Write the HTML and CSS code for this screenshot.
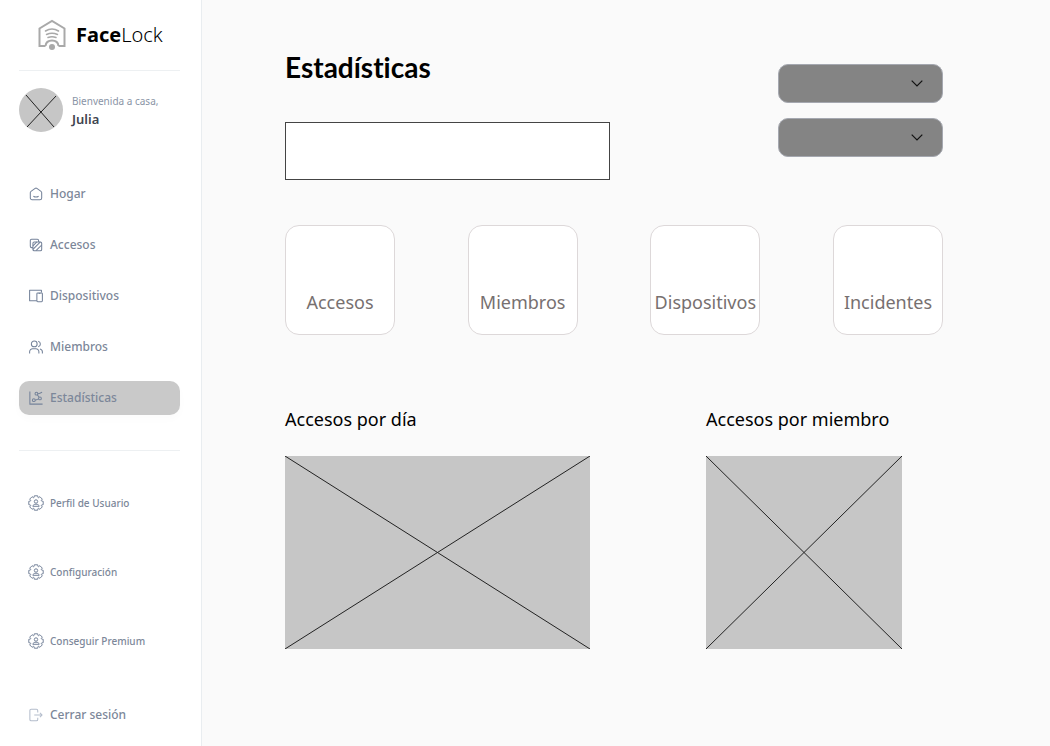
FILE: index.html
```html
<!DOCTYPE html>
<html lang="es">
<head>
<meta charset="utf-8">
<meta name="viewport" content="width=device-width, initial-scale=1">
<title>FaceLock</title>
<link rel="stylesheet" href="styles.css">
</head>
<body>
<svg class="sprite" aria-hidden="true">
  <symbol id="gear" viewBox="0 0 16 16">
    <path d="M15.200 6.300V9.700L13.500 10L13.300 10.500L14.300 11.900L11.900 14.300L10.500 13.300L10 13.500L9.700 15.200H6.300L6 13.500L5.500 13.300L4.100 14.300L1.700 11.900L2.700 10.500L2.500 10L.8 9.700V6.300L2.500 6L2.700 5.500L1.700 4.100L4.100 1.700L5.500 2.700L6 2.500L6.300.8H9.700L10 2.500L10.500 2.700L11.900 1.700L14.300 4.100L13.300 5.500L13.500 6z"/>
    <circle cx="8" cy="6.500" r="1.700"/>
    <path d="M4.800 11.300c.3-1.600 1.500-2.100 3.200-2.100s2.900.5 3.200 2.100z"/>
  </symbol>
</svg>
<div class="app">
  <aside class="sidebar">
    <a class="brand" href="#">
      <svg class="brand-logo" viewBox="0 0 28 32" aria-hidden="true">
        <path d="M7.500 27H1.500V9.500L14 2l12.500 7.500V27h-6M7.500 27c.4-3.500 3-5.500 6.500-5.500s6.100 2 6.500 5.500"/>
        <path d="M7.500 12c4-2.500 9-2.500 13 0M8.500 15.500c3.300-1.500 7.700-1.500 11 0M10 18.500c2.500-.8 5.500-.8 8 0" stroke-width="1.500" stroke-linecap="round"/>
        <circle class="brand-dot" cx="14" cy="28" r="3"/>
      </svg>
      <span class="brand-name"><b>Face</b>Lock</span>
    </a>
    <div class="user">
      <svg class="avatar" viewBox="0 0 44 44" aria-hidden="true">
        <circle cx="22" cy="22" r="22"/>
        <path d="M7 7l28 32M37 8L8 39"/>
      </svg>
      <div class="user-text">
        <span class="greeting">Bienvenida a casa,</span>
        <strong class="user-name">Julia</strong>
      </div>
    </div>
    <nav class="nav">
      <a class="item" href="#"><svg class="icon" viewBox="0 0 16 16" aria-hidden="true"><path d="M1.500 6.500Q1.500 5.500 2.300 5L7 1.600q1-.7 2 0L13.700 5q.8.500.8 1.500v6a2 2 0 0 1-2 2h-9a2 2 0 0 1-2-2zM5 10.500c1.700 1 4.300 1 6 0"/></svg>Hogar</a>
      <a class="item" href="#"><svg class="icon" viewBox="0 0 16 16" aria-hidden="true"><path d="M4.500 11H3a1.500 1.500 0 0 1-1.500-1.500V3A1.500 1.500 0 0 1 3 1.500h6.500A1.500 1.500 0 0 1 11 3v1.500"/><rect x="4.500" y="4.500" width="10" height="10" rx="1.500"/><path d="M4.500 9L9 4.500M4.500 13L13 4.500M8 14.500L14.500 8"/></svg>Accesos</a>
      <a class="item" href="#"><svg class="icon" viewBox="0 0 16 16" aria-hidden="true"><path d="M9 13.500H.7v-12h13.500V4"/><rect x="9" y="4.500" width="6.300" height="10" rx="1"/><path d="M11 5h2"/></svg>Dispositivos</a>
      <a class="item" href="#"><svg class="icon" viewBox="0 0 16 16" aria-hidden="true"><circle cx="6" cy="4.500" r="3.300"/><path d="M.7 15.500v-2A3.500 3.500 0 0 1 4.200 10h3.600a3.500 3.500 0 0 1 3.500 3.500v2M10.500 1.300a3.300 3.300 0 0 1 0 6.400M12.500 10.200a3.500 3.500 0 0 1 2.800 3.300v2"/></svg>Miembros</a>
      <a class="item active" href="#" aria-current="page"><svg class="icon" viewBox="0 0 16 16" aria-hidden="true"><path d="M1 .5V15h14.500"/><circle cx="5.500" cy="10.500" r="1.600"/><circle cx="12.500" cy="8.500" r="1.600"/><circle cx="8.500" cy="3" r="1.600"/><path d="M7 10.500l4-1.500M9.500 4.200l2 3M10 3c2 .3 3-.9 5-1.500"/></svg>Estadísticas</a>
    </nav>
    <nav class="nav nav-secondary">
      <a class="item" href="#"><svg class="icon" aria-hidden="true"><use href="#gear"/></svg>Perfil de Usuario</a>
      <a class="item" href="#"><svg class="icon" aria-hidden="true"><use href="#gear"/></svg>Configuración</a>
      <a class="item" href="#"><svg class="icon" aria-hidden="true"><use href="#gear"/></svg>Conseguir Premium</a>
    </nav>
    <button class="item logout" type="button"><svg class="icon icon-light" viewBox="0 0 16 16" aria-hidden="true"><path d="M10 5V3a1.500 1.500 0 0 0-1.500-1.500H2.500A1.500 1.500 0 0 0 1 3v10a1.500 1.500 0 0 0 1.500 1.500h6A1.500 1.500 0 0 0 10 13v-2M6 8h9M12.500 5.500L15 8l-2.500 2.500"/></svg>Cerrar sesión</button>
  </aside>
  <main class="main">
    <header class="header">
      <div class="intro">
        <h1 class="title">Estadísticas</h1>
        <input class="field" type="text" aria-label="Buscar">
      </div>
      <div class="filters">
        <div class="filter">
          <select class="select" aria-label="Periodo"><option></option></select>
          <svg class="chevron" viewBox="0 0 12 7" aria-hidden="true"><path d="M.7.700L6 6 11.300.7"/></svg>
        </div>
        <div class="filter">
          <select class="select" aria-label="Miembro"><option></option></select>
          <svg class="chevron" viewBox="0 0 12 7" aria-hidden="true"><path d="M.7.700L6 6 11.300.7"/></svg>
        </div>
      </div>
    </header>
    <section class="cards">
      <button class="card" type="button">Accesos</button>
      <button class="card" type="button">Miembros</button>
      <button class="card" type="button">Dispositivos</button>
      <button class="card" type="button">Incidentes</button>
    </section>
    <section class="charts">
      <div>
        <h2 class="chart-title">Accesos por día</h2>
        <svg class="chart" viewBox="0 0 100 100" preserveAspectRatio="none" aria-hidden="true"><path d="M0 0l100 100M100 0L0 100"/></svg>
      </div>
      <div>
        <h2 class="chart-title">Accesos por miembro</h2>
        <svg class="chart" viewBox="0 0 100 100" preserveAspectRatio="none" aria-hidden="true"><path d="M0 0l100 100M100 0L0 100"/></svg>
      </div>
    </section>
  </main>
</div>
</body>
</html>
```
FILE: styles.css
```css
* {
  box-sizing: border-box;
}

body {
  margin: 0;
  background: #fafafa;
  color: #000;
  font-family: "Noto Sans", "Open Sans", sans-serif;
}

.sprite {
  position: absolute;
  width: 0;
  height: 0;
}

.app {
  display: flex;
  min-height: 100vh;
}

/* Sidebar */
.sidebar {
  display: flex;
  flex: none;
  flex-direction: column;
  width: 202px;
  padding: 0 21px 14px 19px;
  border-right: 1px solid #e9edf0;
  background: #fff;
}

.brand {
  display: flex;
  align-items: center;
  gap: 10px;
  height: 71px;
  padding-left: 19px;
  border-bottom: 1px solid #edf0f2;
  color: #000;
  font-size: 20px;
  font-weight: 300;
  line-height: 28px;
  text-decoration: none;
}

.brand-name b {
  font-weight: 700;
}

.brand-logo {
  width: 28px;
  height: 32px;
  fill: none;
  stroke: #a9a9a9;
  stroke-width: 2;
}

.brand-logo .brand-dot {
  fill: #a9a9a9;
  stroke: none;
}

.user {
  display: flex;
  align-items: center;
  gap: 9px;
  margin: 17px 0 45px;
}

.avatar {
  flex: none;
  width: 44px;
  height: 44px;
  fill: #c6c6c6;
  stroke-width: 1;
}

.avatar path {
  stroke: #222;
}

.user-text {
  display: flex;
  flex-direction: column;
  white-space: nowrap;
}

.greeting {
  color: #8a94a6;
  font-size: 10px;
  line-height: 18px;
}

.user-name {
  color: #3f4550;
  font-size: 13px;
  font-weight: 600;
  line-height: 18px;
}

.nav {
  display: flex;
  flex-direction: column;
  gap: 17px;
}

.item {
  display: flex;
  align-items: center;
  gap: 7px;
  height: 34px;
  padding: 0 10px;
  border: 0;
  border-radius: 10px;
  background: none;
  color: #7c8799;
  font: 500 12px/18px "Noto Sans", "Open Sans", sans-serif;
  text-decoration: none;
  white-space: nowrap;
}

.item.active {
  background: #c9c9c9;
  box-shadow: 0 4px 8px rgba(0, 0, 0, 0.02);
}

.icon {
  flex: none;
  width: 14px;
  height: 14px;
  fill: none;
  stroke: #75839a;
  stroke-width: 1.2;
  stroke-linejoin: round;
}

.nav-secondary {
  gap: 35px;
  margin-top: 35px;
  padding-top: 35px;
  border-top: 1px solid #edf0f2;
}

.nav-secondary .item {
  gap: 6px;
  padding: 0 9px;
  font-size: 10px;
}

.nav-secondary .icon {
  width: 16px;
  height: 16px;
  stroke-width: 1;
}

.icon-light {
  stroke: #b4bdcc;
}

.logout {
  margin-top: auto;
}

/* Content */
.main {
  flex: 1;
  min-width: 0;
  padding: 47px 107px 48px 83px;
}

.header {
  display: flex;
  justify-content: space-between;
}

.title {
  margin: 0 0 35px;
  font: 700 28px/40px Lato, sans-serif;
  font-variant-ligatures: none;
}

.field {
  display: block;
  width: 325px;
  height: 58px;
  padding: 0 16px;
  border: 1px solid #444;
  background: #fff;
  font: 16px/24px "Noto Sans", sans-serif;
}

.filters {
  display: flex;
  flex-direction: column;
  gap: 15px;
  padding-top: 17px;
}

.filter {
  position: relative;
}

.select {
  display: block;
  width: 165px;
  height: 39px;
  padding: 0 40px 0 16px;
  border: 1px solid #a5a8b0;
  border-radius: 10px;
  appearance: none;
  background: #848484;
}

.chevron {
  position: absolute;
  top: 16px;
  right: 20px;
  width: 12px;
  height: 7px;
  fill: none;
  stroke: #111;
  stroke-width: 1.2;
  pointer-events: none;
}

.cards {
  display: flex;
  justify-content: space-between;
  margin-top: 45px;
}

.card {
  display: flex;
  align-items: flex-end;
  justify-content: center;
  width: 110px;
  height: 110px;
  padding: 0 0 19px;
  border: 1px solid #ddd8d9;
  border-radius: 14px;
  background: #fff;
  color: #777070;
  font: 18px/26px "Noto Sans", sans-serif;
}

.charts {
  display: grid;
  grid-template-columns: 305fr 196fr;
  gap: 116px;
  margin-top: 71px;
  padding-right: 41px;
}

.chart-title {
  margin: 0 0 24px;
  font-size: 18px;
  font-weight: 400;
  line-height: 26px;
  white-space: nowrap;
}

.chart {
  display: block;
  width: 100%;
  height: 193px;
  background: #c6c6c6;
  stroke: #222;
}

.chart path {
  vector-effect: non-scaling-stroke;
}
```
